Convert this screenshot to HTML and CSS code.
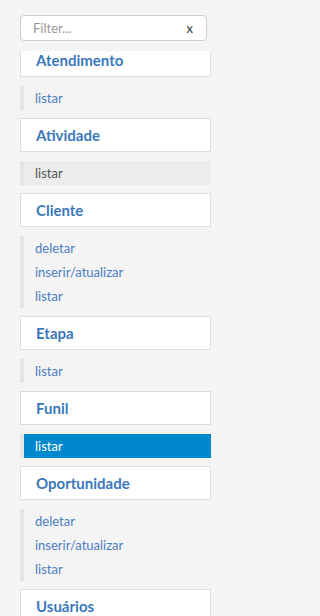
FILE: index.html
```html
<!DOCTYPE html>
<html lang="pt">
<head>
<meta charset="utf-8">
<title>Menu</title>
<link rel="stylesheet" href="styles.css">
</head>
<body>
<div class="sidebar">
  <div class="filter">
    <span class="filter-placeholder">Filter...</span>
    <span class="filter-clear">x</span>
  </div>
  <div class="menu">
    <div class="menu-inner">
      <div class="panel">Atendimento</div>
      <ul class="sub">
        <li class="item">listar</li>
      </ul>
      <div class="panel">Atividade</div>
      <ul class="sub">
        <li class="item hover">listar</li>
      </ul>
      <div class="panel">Cliente</div>
      <ul class="sub">
        <li class="item">deletar</li>
        <li class="item">inserir/atualizar</li>
        <li class="item">listar</li>
      </ul>
      <div class="panel">Etapa</div>
      <ul class="sub">
        <li class="item">listar</li>
      </ul>
      <div class="panel">Funil</div>
      <ul class="sub">
        <li class="item active">listar</li>
      </ul>
      <div class="panel">Oportunidade</div>
      <ul class="sub">
        <li class="item">deletar</li>
        <li class="item">inserir/atualizar</li>
        <li class="item">listar</li>
      </ul>
      <div class="panel">Usuários</div>
      <ul class="sub">
        <li class="item">listar</li>
      </ul>
    </div>
  </div>
</div>
</body>
</html>
```
FILE: styles.css
```css
html, body {
  margin: 0;
  padding: 0;
  background: #f4f4f4;
  overflow: hidden;
  font-family: Lato, "Liberation Sans", sans-serif;
}
.sidebar {
  width: 191px;
  padding: 15px 0 0 20px;
}
.filter {
  box-sizing: border-box;
  width: 187px;
  height: 26px;
  border: 1px solid #cfcfcf;
  border-radius: 4px;
  background: #fff;
  display: flex;
  align-items: center;
  justify-content: space-between;
  padding: 0 13px 0 12px;
  font-size: 13px;
}
.filter-placeholder {
  color: #9a9a9a;
}
.filter-clear {
  color: #333;
}
.menu {
  margin-top: 10px;
  height: 565px;
  overflow: hidden;
}
.menu-inner {
  margin-top: -8px;
}
.panel {
  box-sizing: border-box;
  height: 34px;
  border: 1px solid #dedede;
  background: #fff;
  padding: 0 15px;
  display: flex;
  align-items: center;
  font-size: 15px;
  font-weight: 700;
  color: #3a78bc;
}
.sub {
  list-style: none;
  margin: 9px 0 8px;
  padding: 0;
  border-left: 4px solid #e4e4e4;
}
.item {
  height: 24px;
  line-height: 24px;
  padding-left: 11px;
  font-size: 13px;
  color: #4b7dc0;
}
.item.hover {
  background: #ececec;
  color: #555;
}
.item.active {
  background: #0088cc;
  color: #fff;
}
```
